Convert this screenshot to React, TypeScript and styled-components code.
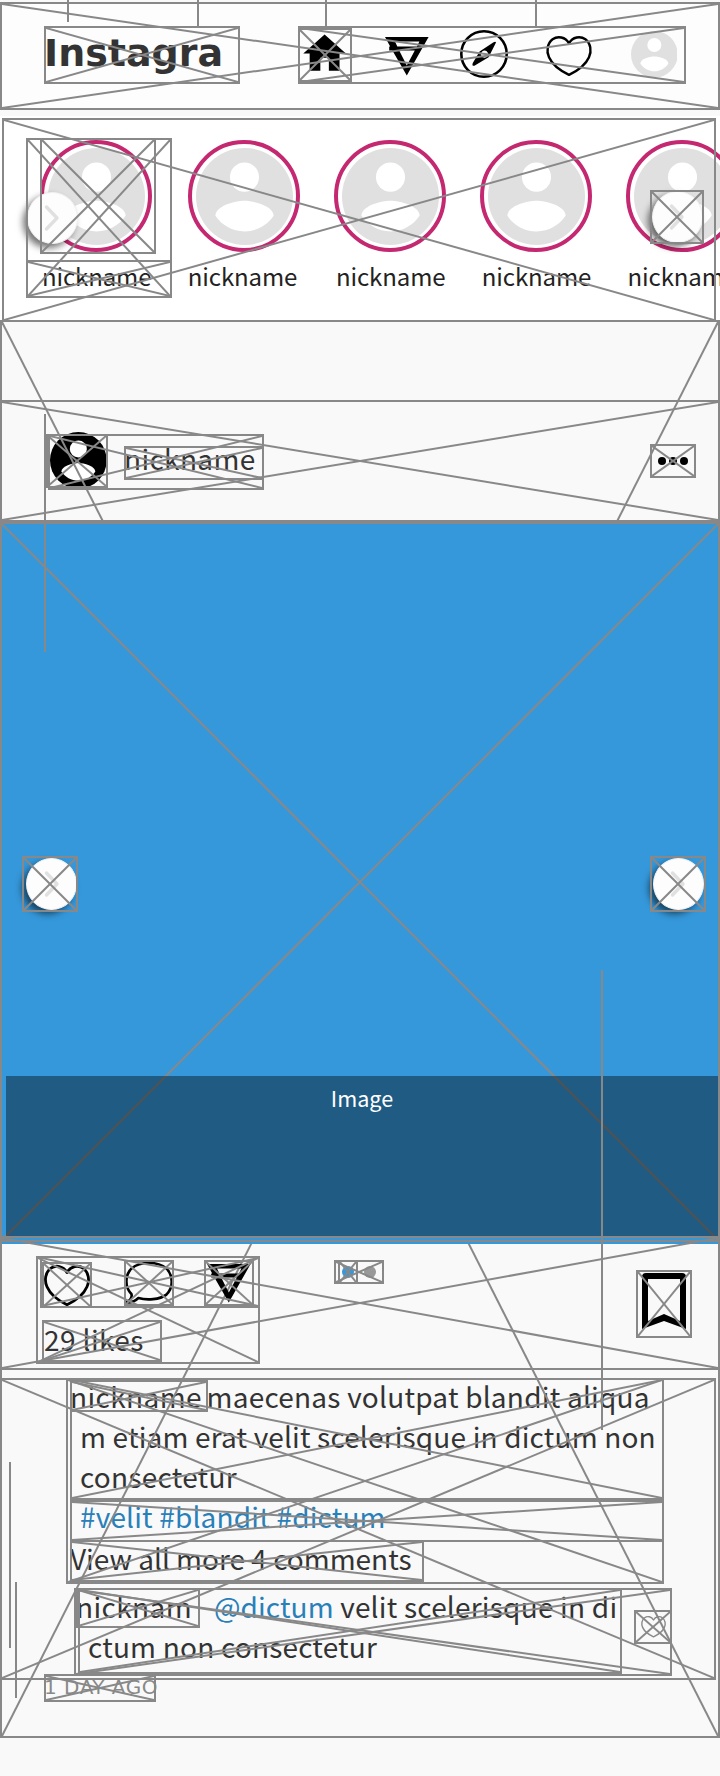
import React from "react";
import styled, { createGlobalStyle, css } from "styled-components";

const LINE = "#888888";
const INK = "#333333";
const LINK = "#2980b9";

const Global = createGlobalStyle`
  *, *::before, *::after { box-sizing: border-box; }
  body {
    margin: 0;
    background: #f9f9f9;
    color: ${INK};
    font-family: "Noto Sans CJK SC", "Noto Sans", sans-serif;
  }
`;

/* ---------- wireframe outline: border with crossing diagonals ---------- */

const Outline = styled.svg<{ $z?: number }>`
  position: absolute;
  inset: 0;
  width: 100%;
  height: 100%;
  border: 2px solid ${LINE};
  pointer-events: none;
  z-index: ${(p) => p.$z ?? 2};

  line {
    stroke: ${LINE};
    stroke-width: 2;
  }
`;

const Wire = ({ z }: { z?: number }) => (
  <Outline $z={z}>
    <line x1="0" y1="0" x2="100%" y2="100%" />
    <line x1="0" y1="100%" x2="100%" y2="0" />
  </Outline>
);

const Connector = styled.span<{ $x: number; $y: number; $length: number }>`
  position: absolute;
  left: ${(p) => p.$x}px;
  top: ${(p) => p.$y}px;
  width: 2px;
  height: ${(p) => p.$length}px;
  background: ${LINE};
  z-index: 5;
`;

/* ---------- page ---------- */

const Page = styled.div`
  position: relative;
  display: flex;
  flex-direction: column;
  width: 720px;
  height: 1776px;
  padding-top: 2px;
  overflow: hidden;
  background: #f9f9f9;
`;

/* ---------- top bar ---------- */

const TopBar = styled.header`
  position: relative;
  display: flex;
  justify-content: space-between;
  height: 108px;
  padding: 24px 34px 0 44px;
  background: #fdfdfd;
`;

const Logo = styled.h1`
  position: relative;
  width: 196px;
  height: 58px;
  margin: 0;
  font: bold 38px/54px "DejaVu Sans", sans-serif;
  color: #333;
`;

const Nav = styled.nav`
  position: relative;
  display: flex;
  width: 388px;
  height: 58px;
`;

const NavItem = styled.span<{ $width: number; $drop?: number }>`
  position: relative;
  display: flex;
  align-items: center;
  justify-content: center;
  width: ${(p) => p.$width}px;
  height: 54px;
  margin-top: 2px;

  > svg:first-child {
    flex: none;
    margin-top: ${(p) => (p.$drop ?? 0) * 2 - 2}px;
  }
`;

/* ---------- stories ---------- */

const Stories = styled.section`
  position: relative;
  height: 206px;
  margin-top: 6px;
  padding: 22px 0 0 26px;
  overflow: hidden;
  background: #fff;
`;

const StoriesFrame = styled.div`
  position: absolute;
  inset: 2px 4px 0 2px;
`;

const StoryList = styled.div`
  display: flex;
  width: 760px;
`;

const Story = styled.div`
  position: relative;
  flex: none;
  width: 146px;
  height: 160px;

  &:first-child { margin-right: 2px; }
`;

const StoryPhoto = styled.div`
  position: relative;
  display: flex;
  align-items: center;
  width: 116px;
  height: 116px;
  margin-left: 14px;
`;

const Ring = styled.span`
  display: flex;
  align-items: center;
  justify-content: center;
  width: 112px;
  height: 112px;
  border: 4px solid #c42870;
  border-radius: 50%;
`;

const StoryName = styled.div<{ $indent: number }>`
  position: relative;
  height: 38px;
  margin-top: 6px;
  padding-left: ${(p) => p.$indent}px;
  font-size: 24px;
  line-height: 31px;
  letter-spacing: -0.12px;
  color: #222;
  white-space: nowrap;
`;

const RoundButton = styled.button<{ $x: number; $y: number; $size: number }>`
  position: absolute;
  left: ${(p) => p.$x}px;
  top: ${(p) => p.$y}px;
  display: flex;
  align-items: center;
  justify-content: center;
  width: ${(p) => p.$size}px;
  height: ${(p) => p.$size}px;
  padding: 0;
  border: 0;
  background: none;
  z-index: 3;
`;

const Disc = styled.span<{ $nudge?: number }>`
  display: flex;
  align-items: center;
  justify-content: center;
  width: 51px;
  height: 52px;
  margin-left: ${(p) => p.$nudge ?? 0}px;
  border: 1px solid #f1f1f1;
  border-radius: 50%;
  background: #fdfdfd;
  box-shadow: -4px 4px 7px rgba(0, 0, 0, 0.55);
`;

/* ---------- post ---------- */

const Post = styled.article`
  position: relative;
  height: 1418px;
  margin-top: -2px;
  padding-top: 80px;
  background: #f9f9f9;
`;

const PostHeader = styled.header`
  position: relative;
  display: flex;
  justify-content: space-between;
  align-items: flex-start;
  height: 122px;
  padding: 34px 24px 0 46px;
`;

const Author = styled.div`
  position: relative;
  display: flex;
  width: 218px;
  height: 56px;
`;

const AuthorFrame = styled.div`
  position: absolute;
  inset: 0 0 0 2px;
`;

const AuthorPhoto = styled.div`
  position: relative;
  display: flex;
  align-items: center;
  justify-content: center;
  width: 62px;
  height: 54px;

  > svg:first-child { flex: none; margin: -2px 0 0 3px; }
`;

const Framed = styled.div<{ $w: number; $h: number }>`
  position: relative;
  width: ${(p) => p.$w}px;
  height: ${(p) => p.$h}px;
  white-space: nowrap;
`;

const AuthorName = styled(Framed)`
  margin: 12px 0 0 16px;
  font-size: 28px;
  line-height: 24px;
  letter-spacing: 0.35px;
`;

const MoreButton = styled(Framed)`
  display: flex;
  align-items: center;
  justify-content: center;
  gap: 3.4px;
  margin-top: 10px;
`;

const Dot = styled.span<{ $size: number; $color: string }>`
  width: ${(p) => p.$size}px;
  height: ${(p) => p.$size}px;
  border-radius: 50%;
  background: ${(p) => p.$color};
`;

const Photo = styled.div`
  position: relative;
  display: flex;
  align-items: flex-end;
  height: 720px;
  padding: 0 2px 6px 6px;
  background: #3598db;
  box-shadow: 0 2px 0 #3598db;
  z-index: 3;
`;

const PhotoCaption = styled.div`
  position: relative;
  width: 100%;
  height: 160px;
  padding-top: 6px;
  background: rgba(0, 0, 0, 0.4);
  color: #fff;
  font-size: 21.6px;
  line-height: 32px;
  text-align: center;
  z-index: 2;
`;

/* ---------- actions ---------- */

const Actions = styled.div`
  position: relative;
  display: flex;
  height: 134px;
  margin-top: -6px;
  padding: 20px 28px 0 36px;
  z-index: 4;
`;

const Reactions = styled.div`
  position: relative;
  width: 224px;
  height: 108px;
`;

const ReactionIcons = styled.div`
  position: relative;
  display: flex;
  width: 220px;
  height: 52px;
  margin-left: 4px;
`;

const IconBox = styled(Framed)<{ $left: number; $top: number }>`
  display: flex;
  align-items: center;
  justify-content: center;
  flex: none;
  margin: ${(p) => p.$top}px 0 0 ${(p) => p.$left}px;

  > svg { flex: none; }
`;

const Likes = styled(Framed)`
  margin: 12px 0 0 6px;
  padding-left: 2px;
  font-size: 28px;
  line-height: 38px;
  letter-spacing: 0.4px;
`;

const Pager = styled(Framed)`
  display: flex;
  align-items: center;
  gap: 10px;
  margin: 4px 0 0 74px;
  padding-left: 8px;
`;

const PagerFrame = styled.span`
  position: absolute;
  inset: 0 26px 0 4px;
`;

const Bookmark = styled(Framed)`
  margin: 14px 0 0 auto;
`;

/* ---------- comments ---------- */

const Comments = styled.section`
  position: relative;
  width: 716px;
  height: 302px;
  margin-top: 8px;
  font-size: 28px;
  line-height: 40px;
`;

const Description = styled.div`
  position: relative;
  width: 598px;
  height: 206px;
  margin-left: 66px;
  padding-left: 4px;
`;

const TextBlock = styled.div<{ $h: number; $w?: number; $overlap?: number }>`
  position: relative;
  display: flex;
  flex-direction: column;
  width: ${(p) => (p.$w ? `${p.$w}px` : "100%")};
  height: ${(p) => p.$h}px;
  margin-top: ${(p) => -(p.$overlap ?? 0)}px;
`;

const TextLine = styled.div<{ $indent?: number; $spacing?: number; $lift?: number; $link?: boolean }>`
  display: flex;
  height: 40px;
  margin-top: ${(p) => -(p.$lift ?? 0)}px;
  padding-left: ${(p) => p.$indent ?? 0}px;
  letter-spacing: ${(p) => p.$spacing ?? 0.2}px;
  white-space: pre;
  ${(p) => p.$link && css`color: ${LINK};`}
`;

const Nick = styled.span<{ $w: number; $h: number; $top: number; $left?: number; $gap?: number }>`
  position: relative;
  flex: none;
  width: ${(p) => p.$w}px;
  height: ${(p) => p.$h}px;
  margin: ${(p) => p.$top}px ${(p) => p.$gap ?? 0}px 0 ${(p) => p.$left ?? 0}px;
  line-height: ${(p) => 40 - p.$top * 2}px;
  letter-spacing: 0.4px;
`;

const Mention = styled.span`
  margin-left: 14px;
  color: ${LINK};
  letter-spacing: 0.1px;
`;

const Reply = styled.div`
  position: relative;
  display: flex;
  width: 598px;
  height: 88px;
  margin: 4px 0 0 74px;
  padding-left: 4px;
`;

const Age = styled(Framed)`
  margin: -6px 0 0 44px;
  font-family: "DejaVu Sans", sans-serif;
  font-size: 20px;
  line-height: 26px;
  letter-spacing: 0.5px;
  color: #888;
  z-index: 3;
`;

/* ---------- icons ---------- */

const Person = ({ size, color }: { size: number; color: string }) => (
  <svg width={size} height={size} viewBox="2 2 20 20">
    <circle cx="12" cy="12" r="10" fill={color} />
    <circle cx="12" cy="8" r="3" fill="#fff" />
    <path d="M12 19.2c-2.5 0-4.71-1.28-6-3.22.03-1.99 4-3.08 6-3.08s5.97 1.09 6 3.08c-1.29 1.94-3.5 3.22-6 3.22z" fill="#fff" />
  </svg>
);

const Home = () => (
  <svg width="51.2" height="51.2" viewBox="0 0 24 24">
    <path d="M10 20v-6h4v6h5v-8h3L12 3 2 12h3v8z" />
  </svg>
);

const Send = () => (
  <svg width="44" height="39" viewBox="0 0 44 39">
    <path
      fillRule="evenodd"
      d="M0 0H43.6L21.8 38.6L7.4 13.6H4.2V9.4H5.2zM10 4.4L12.3 9.4H32L34.4 4.4zM14.2 13.6L21.8 28.4L29.8 13.6z"
    />
  </svg>
);

const Compass = () => (
  <svg width="50" height="50" viewBox="0 0 50 50">
    <circle cx="25" cy="25" r="22.7" fill="none" stroke="#000" strokeWidth="2.6" />
    <path
      fillRule="evenodd"
      d="M37 13.4L29.6 28.2L15.4 36.8Q12.6 37.2 13.8 34L20.6 22.4L34.6 13.2Q36.6 12.2 37 13.4zM25.5 21.6a3.6 3.6 0 1 0 .1 0z"
    />
  </svg>
);

const HeartSvg = styled.svg`
  overflow: visible;
`;

const Heart = ({ w, h, stroke = "#000", weight = 2.4 }: { w: number; h: number; stroke?: string; weight?: number }) => (
  <HeartSvg width={w} height={h} viewBox="0 0 46 40" preserveAspectRatio="none">
    <path
      d="M23 7.4C19.5.6 11.5-.2 6.6 3.2C1.2 7.2.2 15.4 3 21.2C6.6 29.4 15 35 23 38.8C31 35 39.4 29.4 43 21.2C45.8 15.4 44.8 7.2 39.4 3.2C34.5-.2 26.5.6 23 7.4z"
      fill="none"
      stroke={stroke}
      strokeWidth={weight}
      strokeLinejoin="round"
      vectorEffect="non-scaling-stroke"
    />
  </HeartSvg>
);

const Bubble = () => (
  <svg width="48" height="44" viewBox="0 0 48 44">
    <path
      d="M6.4 33C-.2 26.4-.4 14.4 6.6 7.4C15 .2 33 .2 41.4 7.4C48.6 15 48.4 27 41.4 33.6C34.6 38.6 22 39.6 13.4 37C10 40.2 6 41.8 2 41.2C5.6 38.8 7.4 36 6.4 33z"
      fill="none"
      stroke="#000"
      strokeWidth="2.6"
      strokeLinejoin="round"
    />
  </svg>
);

const Ribbon = () => (
  <svg width="56" height="68" viewBox="0 0 56 68">
    <path d="M6 59V7q0-4 4-4H46q4 0 4 4V59L28 51z M12 9V51L28 44L44 51V9z" fillRule="evenodd" />
  </svg>
);

const Chevron = () => (
  <svg width="16" height="28" viewBox="0 0 16 28">
    <path d="M2.5 3L13 14L2.5 25" fill="none" stroke="#e0e0e0" strokeWidth="3.4" strokeLinecap="round" strokeLinejoin="round" />
  </svg>
);

/* ---------- screen ---------- */

const STORY_INDENTS = [15.9, 13.8, 16, 15.8, 15.6];

export default function App() {
  return (
    <Page>
      <Global />
      <TopBar>
        <Wire />
        <Logo>
          Instagra
          <Wire />
        </Logo>
        <Nav>
          <NavItem $width={54}><Home /><Wire /></NavItem>
          <NavItem $width={110} $drop={2}><Send /></NavItem>
          <NavItem $width={44}><Compass /></NavItem>
          <NavItem $width={126} $drop={2}><Heart w={46} h={40} /></NavItem>
          <NavItem $width={44}><Person size={46.7} color="#e0e0e0" /></NavItem>
          <Wire />
        </Nav>
      </TopBar>
      <Connector $x={67} $y={0} $length={22} />
      <Connector $x={197} $y={0} $length={26} />
      <Connector $x={325} $y={0} $length={26} />
      <Connector $x={535} $y={0} $length={26} />

      <Stories>
        <StoryList>
          {STORY_INDENTS.map((indent, i) => (
            <Story key={i}>
              <StoryPhoto>
                <Ring><Person size={97} color="#e0e0e0" /></Ring>
                {i === 0 && <Wire z={4} />}
              </StoryPhoto>
              <StoryName $indent={indent}>
                nickname
                {i === 0 && <Wire />}
              </StoryName>
              {i === 0 && <Wire z={4} />}
            </Story>
          ))}
        </StoryList>
        <RoundButton $x={25} $y={75} $size={54} aria-label="Previous stories">
          <Disc><Chevron /></Disc>
        </RoundButton>
        <RoundButton $x={650} $y={74} $size={54} aria-label="Next stories">
          <Disc><Chevron /></Disc>
          <Wire />
        </RoundButton>
        <StoriesFrame><Wire /></StoriesFrame>
      </Stories>

      <Post>
        <Wire />
        <PostHeader>
          <Wire />
          <Author>
            <AuthorPhoto><Person size={56.7} color="#000" /><Wire /></AuthorPhoto>
            <AuthorName $w={140} $h={34}>nickname<Wire /></AuthorName>
            <AuthorFrame><Wire /></AuthorFrame>
          </Author>
          <MoreButton $w={46} $h={34}>
            <Dot $size={8} $color="#000" />
            <Dot $size={8} $color="#000" />
            <Dot $size={8} $color="#000" />
            <Wire />
          </MoreButton>
        </PostHeader>

        <Photo>
          <Wire z={1} />
          <PhotoCaption>Image</PhotoCaption>
          <RoundButton $x={22} $y={334} $size={56} aria-label="Previous image">
            <Disc $nudge={3}><Chevron /></Disc>
            <Wire />
          </RoundButton>
          <RoundButton $x={650} $y={334} $size={56} aria-label="Next image">
            <Disc><Chevron /></Disc>
            <Wire />
          </RoundButton>
        </Photo>

        <Actions>
          <Wire />
          <Reactions>
            <ReactionIcons>
              <IconBox $w={50} $h={46} $left={2} $top={6}><Heart w={46} h={41} weight={2.8} /><Wire /></IconBox>
              <IconBox $w={50} $h={46} $left={32} $top={4}><Bubble /><Wire /></IconBox>
              <IconBox $w={50} $h={46} $left={30} $top={4}><Send /><Wire /></IconBox>
              <Wire />
            </ReactionIcons>
            <Likes $w={120} $h={42}>29 likes<Wire /></Likes>
            <Wire />
          </Reactions>
          <Pager $w={50} $h={24}>
            <Dot $size={12} $color="#3598db" />
            <Dot $size={12} $color="#999" />
            <PagerFrame><Wire /></PagerFrame>
            <Wire />
          </Pager>
          <Bookmark $w={56} $h={68}><Ribbon /><Wire /></Bookmark>
        </Actions>

        <Comments>
          <Wire />
          <Description>
            <TextBlock $h={122}>
              <TextLine $spacing={0.22} $lift={2}>
                <Nick $w={138} $h={32} $top={4} $gap={-1.4}>nickname<Wire /></Nick>
                {"maecenas volutpat blandit aliqua"}
              </TextLine>
              <TextLine $indent={10} $spacing={0.17}>m etiam erat velit scelerisque in dictum non</TextLine>
              <TextLine $indent={10} $spacing={0.25}>consectetur</TextLine>
              <Wire />
            </TextBlock>
            <TextBlock $h={42}>
              <TextLine $indent={10} $spacing={0.18} $lift={4} $link>#velit #blandit #dictum</TextLine>
              <Wire />
            </TextBlock>
            <TextBlock $h={42} $w={354} $overlap={2}>
              <TextLine $spacing={0} $lift={2}>View all more 4 comments</TextLine>
              <Wire />
            </TextBlock>
            <Wire />
          </Description>
          <Reply>
            <TextBlock $h={86} $w={544}>
              <TextLine $lift={2} $spacing={0.22}>
                <Nick $w={124} $h={40} $top={2} $left={-2}>nicknam<Wire /></Nick>
                <Mention>@dictum</Mention>
                {" velit scelerisque in di"}
              </TextLine>
              <TextLine $indent={10}>ctum non consectetur</TextLine>
              <Wire />
            </TextBlock>
            <IconBox $w={38} $h={34} $left={12} $top={22}><Heart w={25} h={21.5} stroke="#888" weight={1.4} /><Wire /></IconBox>
            <Wire />
          </Reply>
        </Comments>
        <Age $w={112} $h={28}>1 DAY AGO<Wire /></Age>
      </Post>
      <Connector $x={44} $y={414} $length={238} />
      <Connector $x={601} $y={970} $length={460} />
      <Connector $x={9} $y={1462} $length={186} />
      <Connector $x={15} $y={1582} $length={116} />
    </Page>
  );
}
